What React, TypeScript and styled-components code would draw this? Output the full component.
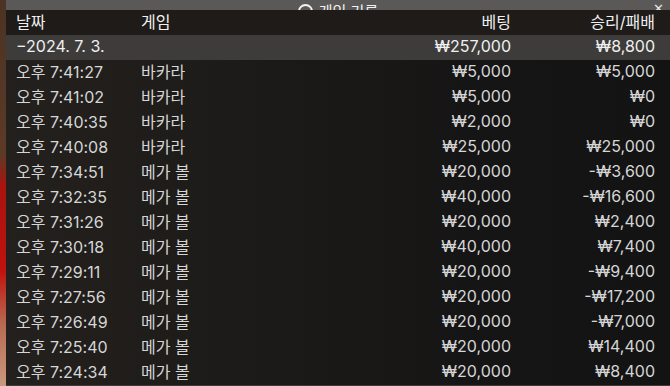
import styled, { createGlobalStyle } from 'styled-components';

const GlobalStyle = createGlobalStyle`
  html, body {
    margin: 0;
    padding: 0;
    background: #151414;
  }
  body {
    font-family: Inter, "Noto Sans", "Noto Sans CJK KR", sans-serif;
  }
`;

const Page = styled.div`
  display: flex;
  width: 670px;
  height: 386px;
  overflow: hidden;
`;

const Backdrop = styled.div`
  width: 6px;
  flex-shrink: 0;
  background: linear-gradient(
    180deg,
    #4a3325 0%,
    #5c3a26 40%,
    #a8140f 48%,
    #c0120e 70%,
    #b86a52 84%,
    #c99a7e 100%
  );
`;

const Panel = styled.div`
  flex: 1;
  display: flex;
  flex-direction: column;
  background: linear-gradient(90deg, #23201d 0%, #1c1a18 40%, #161515 70%, #131313 100%);
`;

const TitleBar = styled.div`
  height: 10px;
  flex-shrink: 0;
  background: #5a5957;
  display: flex;
  align-items: flex-end;
  justify-content: center;
  overflow: hidden;
  color: #f2f2f2;
  font-size: 15px;
  line-height: 15px;
  position: relative;
`;

const TitleText = styled.span`
  margin-bottom: -9px;
  display: flex;
  gap: 6px;
  align-items: center;
`;

const TitleIcon = styled.span`
  display: inline-block;
  width: 11px;
  height: 11px;
  border: 2px solid #f2f2f2;
  border-radius: 50%;
`;

const Close = styled.span`
  position: absolute;
  right: 6px;
  bottom: -6px;
  font-size: 13px;
  color: #e8e8e8;
`;

const Table = styled.div`
  display: grid;
  grid-template-columns: 135px 1fr 150px 159px;
  grid-auto-rows: 25px;
  flex: 1;
  align-content: start;
`;

const Row = styled.div<{ $variant?: 'head' | 'summary' }>`
  display: contents;

  & > * {
    background: ${(p) =>
      p.$variant === 'head' ? '#1e1b19' : p.$variant === 'summary' ? '#3d3c3b' : 'transparent'};
    color: ${(p) => (p.$variant ? '#f0f0f0' : '#d6d6d6')};
  }
`;

const Cell = styled.div<{ $right?: boolean; $first?: boolean; $last?: boolean }>`
  display: flex;
  align-items: center;
  justify-content: ${(p) => (p.$right ? 'flex-end' : 'flex-start')};
  font-size: 16px;
  white-space: nowrap;
  padding-bottom: 4px;
  padding-left: ${(p) => (p.$first ? '10px' : '0')};
  padding-right: ${(p) => (p.$last ? '15px' : '0')};
`;

const Footer = styled.div`
  height: 3px;
  flex-shrink: 0;
  background: #3b3b3b;
`;

type Entry = { time: string; game: string; bet: string; win: string };

const entries: Entry[] = [
  { time: '오후 7:41:27', game: '바카라', bet: '₩5,000', win: '₩5,000' },
  { time: '오후 7:41:02', game: '바카라', bet: '₩5,000', win: '₩0' },
  { time: '오후 7:40:35', game: '바카라', bet: '₩2,000', win: '₩0' },
  { time: '오후 7:40:08', game: '바카라', bet: '₩25,000', win: '₩25,000' },
  { time: '오후 7:34:51', game: '메가 볼', bet: '₩20,000', win: '-₩3,600' },
  { time: '오후 7:32:35', game: '메가 볼', bet: '₩40,000', win: '-₩16,600' },
  { time: '오후 7:31:26', game: '메가 볼', bet: '₩20,000', win: '₩2,400' },
  { time: '오후 7:30:18', game: '메가 볼', bet: '₩40,000', win: '₩7,400' },
  { time: '오후 7:29:11', game: '메가 볼', bet: '₩20,000', win: '-₩9,400' },
  { time: '오후 7:27:56', game: '메가 볼', bet: '₩20,000', win: '-₩17,200' },
  { time: '오후 7:26:49', game: '메가 볼', bet: '₩20,000', win: '-₩7,000' },
  { time: '오후 7:25:40', game: '메가 볼', bet: '₩20,000', win: '₩14,400' },
  { time: '오후 7:24:34', game: '메가 볼', bet: '₩20,000', win: '₩8,400' },
];

function App() {
  return (
    <>
      <GlobalStyle />
      <Page>
        <Backdrop />
        <Panel>
          <TitleBar>
            <TitleText>
              <TitleIcon />
              게임 기록
            </TitleText>
            <Close>✕</Close>
          </TitleBar>
          <Table>
            <Row $variant="head">
              <Cell $first>날짜</Cell>
              <Cell>게임</Cell>
              <Cell $right>베팅</Cell>
              <Cell $right $last>승리/패배</Cell>
            </Row>
            <Row $variant="summary">
              <Cell $first>−2024. 7. 3.</Cell>
              <Cell />
              <Cell $right>₩257,000</Cell>
              <Cell $right $last>₩8,800</Cell>
            </Row>
            {entries.map((e) => (
              <Row key={e.time}>
                <Cell $first>{e.time}</Cell>
                <Cell>{e.game}</Cell>
                <Cell $right>{e.bet}</Cell>
                <Cell $right $last>{e.win}</Cell>
              </Row>
            ))}
          </Table>
          <Footer />
        </Panel>
      </Page>
    </>
  );
}

export default App;
